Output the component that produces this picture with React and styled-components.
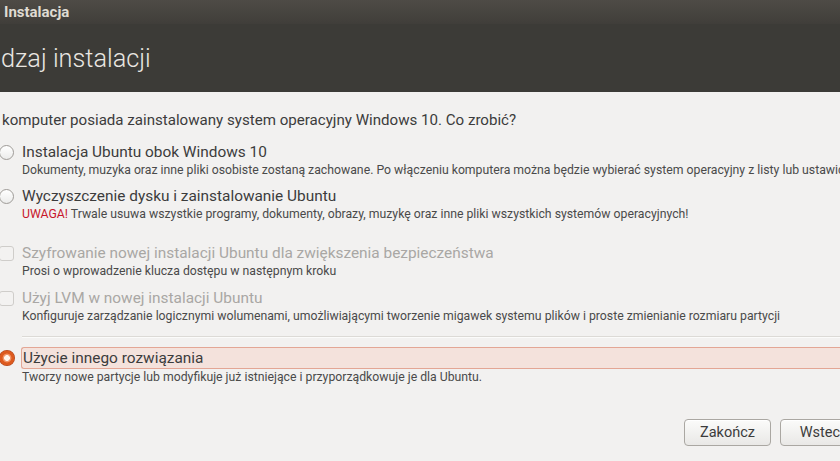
import React from 'react'
import styled, { createGlobalStyle } from 'styled-components'

const GlobalStyle = createGlobalStyle`
  html, body {
    margin: 0;
    padding: 0;
    background: #f2f1f0;
  }
  body {
    font-family: Roboto, "Noto Sans", "DejaVu Sans", sans-serif;
    -webkit-font-smoothing: antialiased;
  }
`

const Window = styled.div`
  width: 840px;
  height: 461px;
  overflow: hidden;
  display: flex;
  flex-direction: column;
  background: #f2f1f0;
`

const TitleBar = styled.div`
  height: 24px;
  display: flex;
  align-items: center;
  padding-left: 4px;
  background: linear-gradient(#4e4b46, #403e3a);
  color: #dfdbd2;
  font-size: 15px;
  font-weight: 700;
`

const Header = styled.div`
  height: 68px;
  display: flex;
  align-items: center;
  padding-left: 1px;
  box-sizing: border-box;
  background: #3c3b37;
  color: #e9e6e1;
  font-size: 25.3px;
  font-weight: 300;
`

const Body = styled.div`
  flex: 1;
  display: flex;
  flex-direction: column;
  padding-top: 18px;
  white-space: nowrap;
  color: #3c3c3c;
`

const Question = styled.div`
  font-size: 15.1px;
  line-height: 20px;
  padding-left: 2px;
  margin-bottom: 12px;
`

const Option = styled.div`
  display: grid;
  grid-template-columns: 15px 1fr;
  column-gap: 7px;
  margin-bottom: ${p => p.$gap || 0}px;
`

const Label = styled.div`
  font-size: 15.4px;
  line-height: 20px;
  color: ${p => (p.$disabled ? '#a9a7a4' : '#3c3c3c')};
  ${p =>
    p.$active &&
    `
    background: #f4e2dc;
    border: 1px solid #e3a695;
    border-right: none;
    border-radius: 3px 0 0 3px;
    margin-left: -1px;
    padding-left: 1px;
  `}
`

const Desc = styled.div`
  grid-column: 2;
  font-size: 12.25px;
  line-height: 16px;
  color: #4a4a4a;
`

const Warn = styled.span`
  color: #c7162b;
`

const Indicator = styled.span`
  align-self: center;
  width: 15px;
  height: 15px;
  box-sizing: border-box;
  border: 1px solid ${p => (p.$disabled ? '#cfcdca' : '#9e9b97')};
  border-radius: ${p => (p.$box ? '3px' : '50%')};
  background: ${p => (p.$disabled ? '#f3f2f1' : 'linear-gradient(#ffffff, #ececeb)')};
  margin-left: -1px;
`

const SelectedRadio = styled.span`
  align-self: center;
  width: 16px;
  height: 16px;
  border-radius: 50%;
  margin-left: -1px;
  background: radial-gradient(circle, #fff6ee 0 2.6px, #f29567 3.2px 4px, #dd5a1e 4.8px 7px, #b5461a 7.6px 8px);
`

const Separator = styled.div`
  margin: 12px 0 10px 22px;
  height: 1px;
  background: #dcdad6;
  box-shadow: 0 1px 0 #fbfbfa;
`

const Footer = styled.div`
  display: flex;
  gap: 9px;
  padding-left: 684px;
  margin-top: 34px;
`

const Button = styled.button`
  flex: none;
  width: 87px;
  height: 27px;
  border: 1px solid #aaa7a2;
  border-radius: 4px;
  background: linear-gradient(#fbfbfa, #e9e8e6);
  box-shadow: inset 0 1px 0 #ffffff;
  color: #3c3c3c;
  font-family: inherit;
  font-size: 14.5px;
  padding: 0;
`

export default function App() {
  return (
    <Window>
      <GlobalStyle />
      <TitleBar>Instalacja</TitleBar>
      <Header>dzaj instalacji</Header>
      <Body>
        <Question>komputer posiada zainstalowany system operacyjny Windows 10. Co zrobić?</Question>

        <Option $gap={8}>
          <Indicator />
          <Label>Instalacja Ubuntu obok Windows 10</Label>
          <Desc>
            Dokumenty, muzyka oraz inne pliki osobiste zostaną zachowane. Po włączeniu komputera można będzie
            wybierać system operacyjny z listy lub ustawić
          </Desc>
        </Option>

        <Option $gap={21}>
          <Indicator />
          <Label>Wyczyszczenie dysku i zainstalowanie Ubuntu</Label>
          <Desc>
            <Warn>UWAGA!</Warn> Trwale usuwa wszystkie programy, dokumenty, obrazy, muzykę oraz inne pliki wszystkich
            systemów operacyjnych!
          </Desc>
        </Option>

        <Option $gap={9}>
          <Indicator $box $disabled />
          <Label $disabled>Szyfrowanie nowej instalacji Ubuntu dla zwiększenia bezpieczeństwa</Label>
          <Desc>Prosi o wprowadzenie klucza dostępu w następnym kroku</Desc>
        </Option>

        <Option>
          <Indicator $box $disabled />
          <Label $disabled>Użyj LVM w nowej instalacji Ubuntu</Label>
          <Desc>
            Konfiguruje zarządzanie logicznymi wolumenami, umożliwiającymi tworzenie migawek systemu plików i proste
            zmienianie rozmiaru partycji
          </Desc>
        </Option>

        <Separator />

        <Option>
          <SelectedRadio />
          <Label $active>Użycie innego rozwiązania</Label>
          <Desc>Tworzy nowe partycje lub modyfikuje już istniejące i przyporządkowuje je dla Ubuntu.</Desc>
        </Option>

        <Footer>
          <Button>Zakończ</Button>
          <Button>Wstecz</Button>
        </Footer>
      </Body>
    </Window>
  )
}
